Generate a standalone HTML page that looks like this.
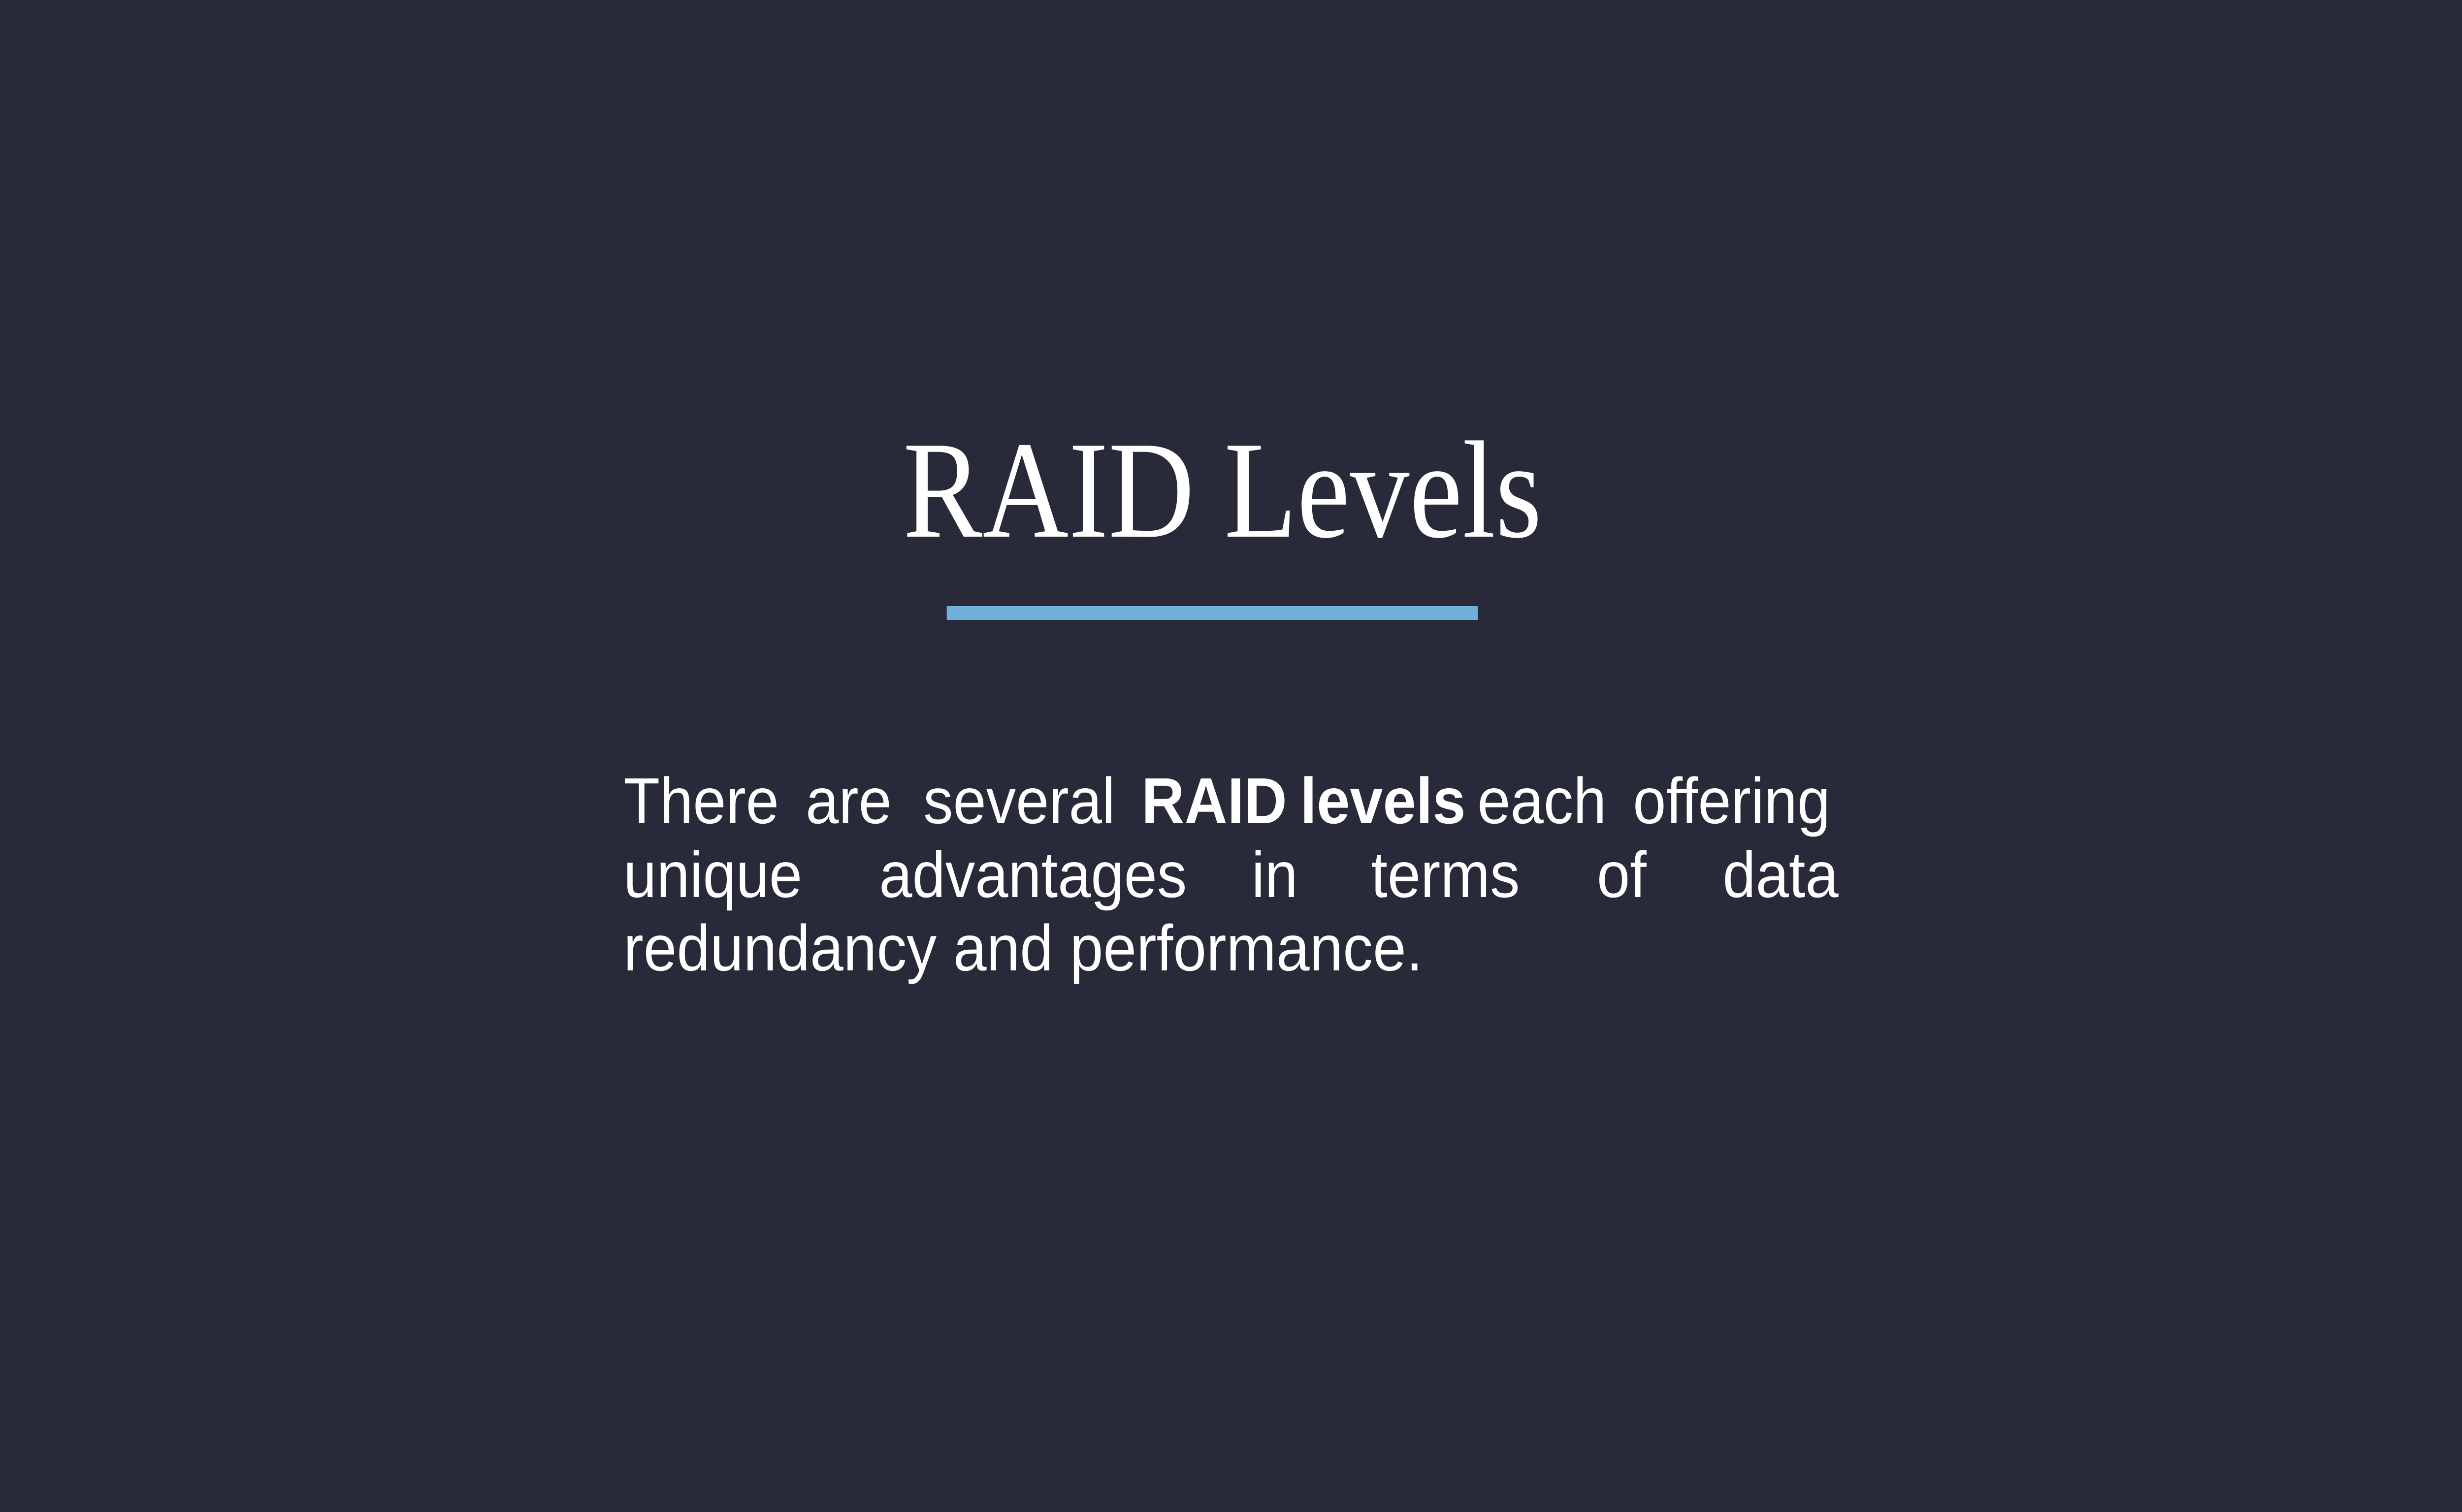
<!DOCTYPE html>
<html><head><meta charset="utf-8"><style>
html,body{margin:0;padding:0;background:#282a39;overflow:hidden}
svg{display:block;width:100vw;height:100vh}
.s{font-family:"Liberation Sans",sans-serif;font-size:132px;fill:#fff}
.b{font-weight:bold}
</style></head><body>
<svg viewBox="0 0 5461 3071" preserveAspectRatio="none" xmlns="http://www.w3.org/2000/svg">
<rect width="5461" height="3071" fill="#282a39"/>
<text x="2003" y="1090" font-family="Liberation Serif, serif" font-size="282" fill="#fff" textLength="1417" lengthAdjust="spacingAndGlyphs">RAID Levels</text>
<rect x="2100" y="1231" width="1178" height="28" fill="#70b0da"/>
<g class="s">
<text y="1672"><tspan x="1383">There</tspan><tspan x="1787">are</tspan><tspan x="2048">several</tspan><tspan x="2532" class="b">RAID</tspan><tspan x="2884" class="b">levels</tspan><tspan x="3277">each</tspan><tspan x="3622">offering</tspan></text>
<text y="1822"><tspan x="1383">unique</tspan><tspan x="1950">advantages</tspan><tspan x="2776">in</tspan><tspan x="3041">terms</tspan><tspan x="3542">of</tspan><tspan x="3821">data</tspan></text>
<text x="1383" y="1971" textLength="1773" lengthAdjust="spacingAndGlyphs">redundancy and performance.</text>
</g>
</svg>
</body></html>
